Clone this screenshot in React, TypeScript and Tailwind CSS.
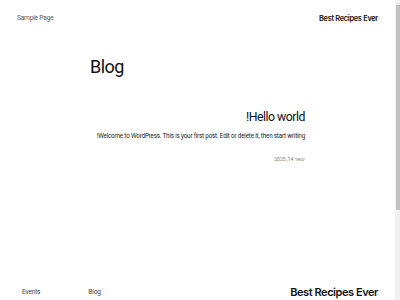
import React from 'react'

const sans = "font-['Roboto','Liberation_Sans',sans-serif]"

function Header() {
  return (
    <header className="flex items-center justify-between pl-[17px] pr-[17px] pt-[9px] h-[28px]">
      <a className="text-[6.6px] text-[#555] tracking-[-0.03em]">Sample Page</a>
      <span className="text-[7.4px] font-semibold text-[#111] tracking-[-0.04em] font-['Inter',sans-serif]">
        Best Recipes Ever
      </span>
    </header>
  )
}

function Post() {
  return (
    <article dir="rtl" className="w-[210px] ml-[95px] flex flex-col items-start">
      <h2 className="text-[12.3px] text-[#111] tracking-[-0.04em] leading-none">Hello world!</h2>
      <p className="mt-[10px] text-[6.3px] text-[#222] tracking-[-0.03em] leading-none whitespace-nowrap">
        Welcome to WordPress. This is your first post. Edit or delete it, then start writing!
      </p>
      <time className="mt-[17px] text-[5px] text-[#777] leading-none">ינואר 14, 2025</time>
    </article>
  )
}

function Footer() {
  return (
    <footer className="flex items-center justify-between pl-[22px] pr-[17px] mt-auto h-[15px]">
      <nav className="flex gap-[48px] text-[6.6px] text-[#444] tracking-[-0.03em] pt-[1px]">
        <a>Events</a>
        <a>Blog</a>
      </nav>
      <span className="text-[11px] font-semibold text-[#111] tracking-[-0.04em] font-['Inter',sans-serif] leading-none">
        Best Recipes Ever
      </span>
    </footer>
  )
}

export default function App() {
  return (
    <div className={`w-[400px] h-[300px] flex bg-white overflow-hidden ${sans}`}>
      <div className="flex-1 flex flex-col">
        <Header />
        <h1 className="ml-[90px] mt-[30px] text-[18px] text-[#111] tracking-[-0.03em] leading-none">Blog</h1>
        <div className="mt-[35px]">
          <Post />
        </div>
        <Footer />
      </div>
      <div className="w-[5px] bg-[#f1f1f1] flex flex-col items-center pt-[5px]">
        <div className="w-[4px] h-[205px] bg-[#c1c1c1]" />
      </div>
    </div>
  )
}
